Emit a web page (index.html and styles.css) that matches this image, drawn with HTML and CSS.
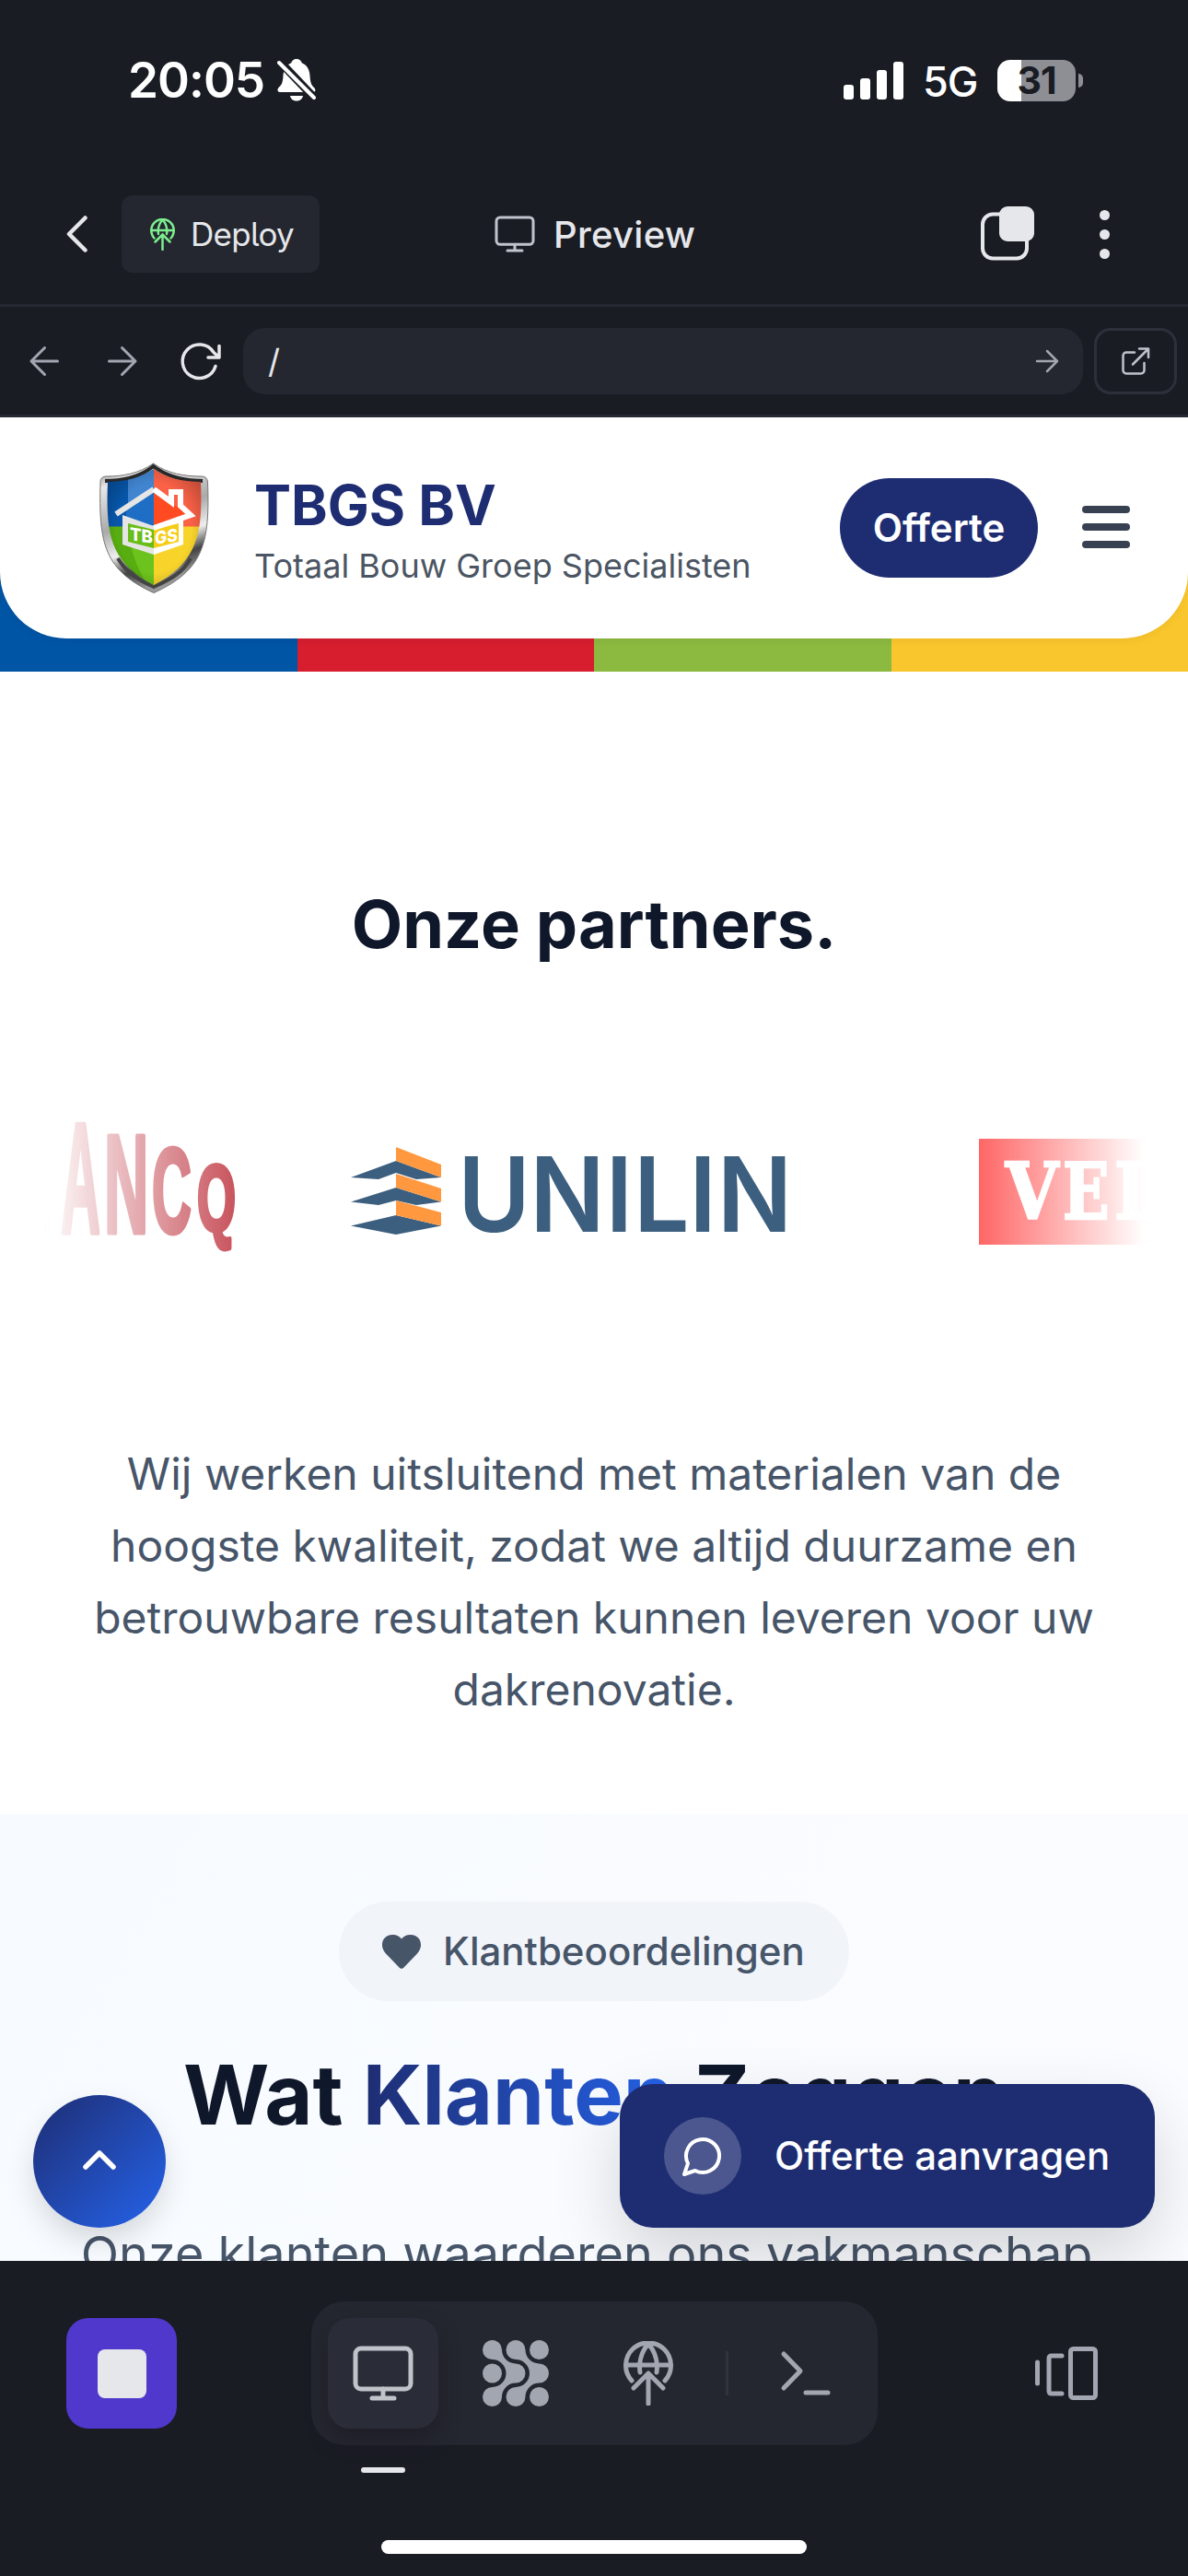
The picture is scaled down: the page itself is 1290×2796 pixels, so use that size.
FILE: index.html
```html
<!DOCTYPE html>
<html lang="nl">
<head>
<meta charset="utf-8">
<title>Preview</title>
<link rel="stylesheet" href="styles.css">
</head>
<body>
<svg class="defs" width="0" height="0" aria-hidden="true">
  <symbol id="monitor" viewBox="0 0 66 60">
    <rect x="3" y="3" width="60" height="44" rx="6"/><path d="M33 47V57M21 57H45"/>
  </symbol>
  <symbol id="globe-up" viewBox="0 0 54 70">
    <path d="M9 43A24.5 24.5 0 1 1 45 43"/><path d="M3 26H51M27 3C19 12 16.500 24 18 34M27 3C35 12 37.500 24 36 34"/><path d="M27 68V35M11 51L27 35L43 51"/>
  </symbol>
</svg>

<div class="status">
  <span class="time">20:05</span>
  <svg class="bell" viewBox="0 0 42 46">
    <path fill="#fff" d="M21 0C24 0 26 2 27 4.500C33 7 35 12 35.500 18C36 26 37 28 40 31C42 33 42 36 39 36H3C0 36 0 33 1.500 31C5 28 6 26 6.500 18C7 12 9 7 15 4.500C16 2 18 0 21 0ZM14 40H28C27 44 24.500 45.500 21 45.500S15 44 14 40Z"/>
    <path stroke="#1a1c24" stroke-width="9" d="M2 2L41 43"/><path stroke="#fff" stroke-width="4" stroke-linecap="round" d="M2 4L40 42"/>
  </svg>
  <div class="signal"><i class="s1"></i><i class="s2"></i><i class="s3"></i><i class="s4"></i></div>
  <span class="net">5G</span>
  <div class="battery">31</div><i class="tip"></i>
</div>

<header class="appbar">
  <svg class="back" viewBox="0 0 23 40"><path d="M20.500 2.500L3 20L20.500 37.500"/></svg>
  <div class="deploy"><svg class="deploy-icon"><use href="#globe-up"/></svg><span>Deploy</span></div>
  <div class="title"><svg class="title-icon"><use href="#monitor"/></svg><span>Preview</span></div>
  <svg class="layers" viewBox="0 0 60 60"><rect x="3" y="8.500" width="48" height="48" rx="11" fill="none" stroke="#e6e7eb" stroke-width="4"/><rect x="21" y="0" width="38" height="38" rx="9" fill="#e6e7eb"/></svg>
  <div class="dots"><i></i><i></i><i></i></div>
</header>

<div class="urlbar">
  <svg class="nav-arrow" viewBox="0 0 32 32"><path d="M30.500 16H2M16.500 1.500L2 16L16.500 30.500"/></svg>
  <svg class="nav-arrow next" viewBox="0 0 32 32"><path d="M1.500 16H30M15.500 1.500L30 16L15.500 30.500"/></svg>
  <svg class="reload" viewBox="0 0 44 40"><path d="M38 25.500A18.300 18.300 0 1 1 36 10.500L42 16M42 3.500V16H30"/></svg>
  <div class="field"><span>/</span><svg class="go" viewBox="0 0 24 24"><path d="M1 12H23M12 1L23 12L12 23"/></svg></div>
  <div class="external"><svg viewBox="0 0 30 30"><path d="M14 5.500H5A3.500 3.500 0 0 0 1.500 9V25A3.500 3.500 0 0 0 5 28.500H21A3.500 3.500 0 0 0 24.500 25V17M19 1.500H29V11M29 1.500L12 18.500"/></svg></div>
</div>

<main class="site">
  <div class="stripe">
    <div class="masthead">
      <svg class="shield" viewBox="0 0 118 142">
        <defs>
          <linearGradient id="rim" x1="0" y1="0" x2="0.300" y2="1"><stop offset="0" stop-color="#777"/><stop offset=".18" stop-color="#e8e8e8"/><stop offset=".5" stop-color="#aaa"/><stop offset=".7" stop-color="#eee"/><stop offset=".85" stop-color="#444"/><stop offset="1" stop-color="#999"/></linearGradient>
          <radialGradient id="shade" cx=".5" cy=".5" r=".62"><stop offset=".55" stop-color="#000" stop-opacity="0"/><stop offset="1" stop-color="#000" stop-opacity=".32"/></radialGradient>
          <clipPath id="inner"><path d="M59 7C72 16 88 21 110 21C112 75 108 108 59 133C10 108 7 75 9 21C29 21 46 16 59 7Z"/></clipPath>
        </defs>
        <path fill="url(#rim)" stroke="#777" d="M58.500 1C74 12 92 15 111 15Q117 15 117.500 21C120 88 113 117 59 141.500C5 117 -1 88 1 21Q1 15 8 15C25 15 43 12 58.500 1Z"/>
        <path fill="none" stroke="#292929" stroke-width="4" d="M6 20C28 20 45 15 58.500 4C73 15 90 20 112 20"/>
        <path fill="none" stroke="#444" stroke-width="4" d="M20 104C30 121 44 128 59 135C74 128 90 121 99 104"/>
        <g clip-path="url(#inner)">
          <path fill="#0756aa" d="M0 0H59V70H0z"/><path fill="#4185d0" d="M31 0H59V70H31z"/><path fill="#fb6147" d="M59 0H118V70H59z"/>
          <path fill="#58ae10" d="M0 69.500H59V142H0z"/><path fill="#6dc31d" d="M31 69.500H59V142Q34 110 31 69.500z"/><path fill="#f8d42b" d="M59 69.500H118V142H59z"/>
          <path fill="url(#shade)" d="M0 0H118V142H0z"/>
        </g>
        <path fill="#1d6ec4" d="M59 31L29 51V61L59 70z"/><path fill="#ff4a22" d="M59 31L96 56L59 70z"/>
        <path fill="#e5e5e5" d="M25 57L59 69V100L25 89z"/><path fill="#fff" d="M59 69L91 57V89L59 100z"/>
        <path fill="#68bd18" d="M31 66L59 73V93L31 86z"/><path fill="#f5cd16" d="M59 73L86 66V86L59 93z"/>
        <path fill="none" stroke="#e5e5e5" stroke-width="6" d="M18 56L59 29"/>
        <path fill="none" stroke="#fff" stroke-width="6" d="M59 29L78 43V32H88V47L99 57L59 71"/>
        <g class="shield-text"><text transform="translate(33 84) skewY(9)" textLength="25" lengthAdjust="spacingAndGlyphs">TB</text><text transform="translate(60 89) skewY(-9)" textLength="25" lengthAdjust="spacingAndGlyphs">GS</text></g>
      </svg>
      <div class="brand"><strong>TBGS BV</strong><span>Totaal Bouw Groep Specialisten</span></div>
      <div class="offerte">Offerte</div>
      <div class="burger"><i></i><i></i><i></i></div>
    </div>
  </div>

  <section class="partners">
    <h2>Onze partners.</h2>
    <div class="logos">
      <svg viewBox="48 1180 1194 220">
        <g opacity=".8">
          <g class="francq">
            <text transform="translate(13 1338) scale(.3 1)" font-size="178">R</text>
            <text transform="translate(66 1338) scale(.35 1)" font-size="170">A</text>
            <text transform="translate(113 1338) scale(.44 1)" font-size="152">N</text>
            <text transform="translate(165 1338) scale(.45 1)" font-size="132">C</text>
            <text transform="translate(214 1336) scale(.53 1)" font-size="102">Q</text>
          </g>
          <path fill="#0d3860" d="M381 1278L430 1260L479 1278L452 1280L430 1273L411 1280zM381 1304.500L430 1289L479 1304.500L452 1308L430 1303L411 1308zM381 1330.500L430 1319L479 1330.500L430 1340z"/>
          <path fill="#ff7f10" d="M430 1245L479 1264V1278L430 1260zM430 1274L479 1290V1304.500L430 1289zM430 1303L479 1316V1330.500L430 1319z"/>
          <text class="unilin" transform="translate(497 1337) scale(.95 1)" x="0 82.500 169 201 264.500 296.500">UNILIN</text>
          <path fill="#f00" d="M1063 1236H1290V1351H1063z"/>
          <g class="velux"><text transform="translate(1092 1323) scale(.88 1)">V</text><text transform="translate(1154 1323) scale(.79 1)">E</text><text transform="translate(1210 1323) scale(.9 1)">L</text></g>
        </g>
      </svg>
    </div>
    <p>Wij werken uitsluitend met materialen van de hoogste kwaliteit, zodat we altijd duurzame en betrouwbare resultaten kunnen leveren voor uw dakrenovatie.</p>
  </section>

  <section class="reviews">
    <div class="pill"><svg viewBox="0 0 42 37"><path d="M21 37Q19.500 37 17 34L4.500 21C0 16 0 12 0 11C0 4 5 0 11 0C16 0 19 2 21 4.500C23 2 26 0 31 0C37 0 42 4 42 11C42 12 42 16 37.500 21L25 34Q22.500 37 21 37Z"/></svg><span>Klantbeoordelingen</span></div>
    <h2>Wat <em>Klanten</em> Zeggen</h2>
    <p>Onze klanten waarderen ons vakmanschap</p>
  </section>

  <div class="to-top"><svg viewBox="0 0 36 21"><path d="M3 18L18 3L33 18"/></svg></div>
  <div class="cta"><div class="cta-icon"><svg viewBox="0 0 24 24"><path d="M7.900 20A9 9 0 1 0 4 16.100L2 22Z"/></svg></div><span>Offerte aanvragen</span></div>
</main>

<footer class="dock">
  <div class="dock-row">
    <div class="stop"><i></i></div>
    <div class="tabs">
      <div class="tab active"><svg class="mon"><use href="#monitor"/></svg></div>
      <div class="tab"><svg class="mesh" viewBox="0 0 72 72"><path id="m" d="M10.500 21A15 15 0 0 1 25.500 36A15 15 0 0 1 10.500 51A10.500 10.500 0 1 0 21 61.500A15 15 0 0 1 36 46.500A10.500 10.500 0 0 0 36 25.500A15 15 0 0 1 21 10.500A10.500 10.500 0 1 0 10.500 21Z"/><use href="#m" x="25.500"/><circle cx="61.500" cy="10.500" r="10.500"/><circle cx="10.500" cy="36" r="10.500"/><circle cx="61.500" cy="61.500" r="10.500"/></svg></div>
      <div class="tab"><svg class="globe"><use href="#globe-up"/></svg></div>
      <i class="sep"></i>
      <div class="tab"><svg class="term" viewBox="0 0 54 48"><path d="M3 3L21 21.500L3 40M27 45H51"/></svg></div>
    </div>
    <svg class="cards" viewBox="0 0 70 60"><path d="M3.500 18V41M30 11H19Q16 11 16 14V49Q16 52 19 52H30"/><rect x="39.500" y="3.500" width="27" height="53" rx="3"/></svg>
  </div>
  <i class="indicator"></i>
  <i class="home"></i>
</footer>
</body>
</html>
```
FILE: styles.css
```css
* { box-sizing: border-box; }
body { margin: 0; width: 1290px; height: 2796px; overflow: hidden; display: flex; flex-direction: column; background: #1a1c24; font-family: Inter, "Liberation Sans", sans-serif; }
i { display: block; font-style: normal; }
svg { display: block; flex: none; overflow: visible; }
.defs { position: absolute; }
span, strong { white-space: nowrap; }

.status { height: 174px; flex: none; display: flex; align-items: center; padding-left: 139px; color: #fff; }
.time { width: 162px; font-size: 53px; font-weight: 600; letter-spacing: -1px; }
.bell { width: 42px; height: 46px; overflow: hidden; }
.signal { display: flex; align-items: flex-end; gap: 7px; height: 41px; margin-left: 573px; }
.signal i { width: 11px; border-radius: 3px; background: #fff; }
.s1 { height: 16px; } .s2 { height: 23px; } .s3 { height: 32px; } .s4 { height: 41px; }
.net { width: 81px; margin: 3px 0 0 21px; font-size: 45px; font-weight: 500; letter-spacing: -1px; }
.battery { width: 85px; height: 45px; border-radius: 14px; background: linear-gradient(90deg, #fff 26px, #8e8f94 26px); color: #1a1c24; font-size: 41px; font-weight: 700; line-height: 45px; text-align: center; letter-spacing: -1px; }
.tip { width: 5px; height: 15px; margin-left: 3px; border-radius: 0 5px 5px 0; background: #8e8f94; }

.appbar { height: 159px; flex: none; display: flex; align-items: center; padding: 4px 0 0 72px; border-bottom: 3px solid #262933; }
.back { width: 23px; height: 40px; fill: none; stroke: #e6e7eb; stroke-width: 4.500; stroke-linecap: round; stroke-linejoin: round; }
.deploy { width: 215px; height: 84px; margin-left: 37px; padding-left: 31px; display: flex; align-items: center; gap: 17px; border-radius: 12px; background: #24272f; color: #e6e7eb; font-size: 35px; letter-spacing: -.7px; font-feature-settings: "cv05"; }
.deploy-icon { width: 27px; height: 35px; fill: none; stroke: #7cee8e; stroke-width: 5; stroke-linecap: round; }
.title { width: 220px; margin-left: 190px; display: flex; align-items: center; gap: 20px; color: #e6e7eb; font-size: 40px; font-weight: 500; letter-spacing: .3px; }
.title-icon { width: 44px; height: 40px; fill: none; stroke: #c0c3cb; stroke-width: 4.500; stroke-linecap: round; }
.layers { width: 60px; height: 60px; margin-left: 307px; }
.dots { margin-left: 70px; display: grid; gap: 10px; }
.dots i { width: 11px; height: 11px; border-radius: 50%; background: #e6e7eb; }

.urlbar { height: 120px; flex: none; display: flex; align-items: center; padding-left: 32px; border-bottom: 3px solid #262933; fill: none; stroke-linecap: round; stroke-linejoin: round; }
.nav-arrow { width: 32px; height: 32px; stroke: #a2a6b1; stroke-width: 3; }
.next { margin-left: 53px; }
.reload { width: 44px; height: 40px; margin-left: 47px; stroke: #e6e7eb; stroke-width: 3.500; }
.field { width: 912px; height: 72px; margin-left: 24px; padding: 0 27px; display: flex; align-items: center; justify-content: space-between; border-radius: 24px; background: #24272f; color: #e6e7eb; font-size: 36px; }
.go { width: 24px; height: 24px; stroke: #a2a6b1; stroke-width: 2.500; }
.external { width: 90px; height: 72px; margin-left: 12px; display: flex; align-items: center; justify-content: center; border: 3px solid #2d303b; border-radius: 18px; }
.external svg { width: 30px; height: 30px; stroke: #bfc2cc; stroke-width: 2.500; }

.site { position: relative; height: 2001px; flex: none; overflow: hidden; background: #fff; }
.stripe { height: 276px; background: linear-gradient(90deg, #0055a5 323px, #d61e2f 323px 645px, #8cb93f 645px 968px, #fac62d 968px); }
.masthead { height: 240px; display: flex; align-items: center; padding-left: 108px; border-radius: 0 0 72px 72px; background: #fff; box-shadow: 0 3px 9px rgba(0, 0, 0, .05); }
.shield { width: 118px; height: 142px; }
.shield-text { fill: #fff; font-size: 19px; font-weight: 800; }
.brand { width: 636px; margin: 4px 0 0 50px; display: flex; flex-direction: column; color: #4b5563; font-size: 36px; line-height: 54px; }
.brand strong { color: #1e2d72; font-size: 60px; line-height: 78px; }
.offerte { width: 215px; height: 108px; border-radius: 54px; background: #1e2d72; color: #fff; font-size: 42px; font-weight: 600; line-height: 108px; text-align: center; }
.burger { width: 52px; margin: -3px 0 0 48px; display: grid; gap: 11px; }
.burger i { height: 8px; border-radius: 4px; background: #374151; }

.partners { height: 1240px; padding: 229px 96px 0; text-align: center; }
.partners h2 { margin: 0; color: #0f172a; font-size: 72px; line-height: 90px; }
.logos { width: 1194px; height: 220px; margin: 132px -48px 0; overflow: hidden; mask-image: linear-gradient(90deg, transparent, #000 20%, #000 80%, transparent); }
.logos svg { width: 1194px; height: 220px; }
.francq { fill: #b10917; stroke: #b10917; stroke-width: 4; stroke-linejoin: round; font-family: "Liberation Sans", sans-serif; font-weight: 700; }
.francq text { vector-effect: non-scaling-stroke; }
.unilin { fill: #0d3860; font-size: 113px; font-weight: 600; }
.velux { fill: #fff; stroke: #fff; stroke-width: 2.500; font-family: "DejaVu Serif", serif; font-size: 84px; font-weight: 700; }
.partners p { margin: 161px 0 0; color: #475569; font-size: 48px; line-height: 78px; }

.reviews { height: 500px; padding-top: 95px; display: flex; flex-direction: column; align-items: center; background: linear-gradient(120deg, #f7fbff, #fbfcff); }
.pill { width: 554px; height: 108px; flex: none; padding-left: 47px; display: flex; align-items: center; gap: 24px; border-radius: 54px; background: #f1f4f9; color: #475569; font-size: 42px; font-weight: 500; }
.pill span { margin-top: -2px; }
.pill svg { width: 42px; height: 37px; fill: #475569; }
.reviews h2 { margin: 48px 0 0; color: #0f172a; font-size: 90px; line-height: 108px; white-space: nowrap; }
.reviews em { font-style: normal; color: transparent; background: linear-gradient(90deg, #1e2d72, #2563eb); background-clip: text; -webkit-background-clip: text; }
.reviews p { margin: 75px 16px 0 0; color: #475569; font-size: 54px; line-height: 88px; white-space: nowrap; }

.to-top { position: absolute; left: 36px; top: 1821px; width: 144px; height: 144px; display: flex; align-items: center; justify-content: center; border-radius: 50%; background: linear-gradient(135deg, #1e2d72, #2563eb); box-shadow: 0 15px 36px -5px rgba(0, 0, 0, .18); }
.to-top svg { width: 36px; height: 21px; margin-top: -3px; fill: none; stroke: #fff; stroke-width: 5.500; stroke-linecap: round; stroke-linejoin: round; }
.cta { position: absolute; left: 673px; top: 1809px; width: 581px; height: 156px; padding-left: 48px; display: flex; align-items: center; gap: 36px; border-radius: 36px; background: #1e2d72; color: #fff; font-size: 42px; font-weight: 500; box-shadow: 0 30px 75px rgba(0, 0, 0, .16); }
.cta span { margin-top: -2px; letter-spacing: -.05px; }
.cta-icon { width: 84px; height: 84px; display: flex; align-items: center; justify-content: center; border-radius: 50%; background: rgba(255, 255, 255, .2); }
.cta-icon svg { width: 48px; height: 48px; fill: none; stroke: #fff; stroke-width: 2; stroke-linejoin: round; }

.dock { height: 342px; flex: none; background: #1a1c24; color: #a2a6b1; }
.dock-row { display: flex; align-items: center; padding: 44px 0 0 72px; }
.stop { width: 120px; height: 120px; display: flex; align-items: center; justify-content: center; border-radius: 24px; background: #5138cc; }
.stop i { width: 53px; height: 53px; border-radius: 8px; background: #e6e7eb; }
.tabs { width: 615px; height: 156px; margin-left: 146px; padding-left: 18px; display: flex; align-items: center; gap: 24px; border-radius: 36px; background: #24272f; }
.tab { width: 120px; height: 120px; display: flex; align-items: center; justify-content: center; border-radius: 24px; fill: none; stroke: #a2a6b1; stroke-width: 5; stroke-linecap: round; stroke-linejoin: round; }
.active { background: #2a2c38; box-shadow: 0 12px 24px -3px rgba(25, 20, 32, .55); stroke: #c0c3c9; }
.mon { width: 66px; height: 60px; }
.mesh { width: 72px; height: 72px; fill: #a2a6b1; stroke: none; }
.globe { width: 54px; height: 70px; }
.sep { width: 3px; height: 48px; background: #30333e; }
.term { width: 54px; height: 48px; }
.cards { width: 70px; height: 60px; margin-left: 170px; fill: none; stroke: #a2a6b1; stroke-width: 5; stroke-linecap: round; stroke-linejoin: round; }
.indicator { width: 48px; height: 6px; margin: 24px 0 0 392px; border-radius: 3px; background: #e6e7eb; }
.home { width: 462px; height: 15px; margin: 73px auto 0; border-radius: 8px; background: #fff; }
```
